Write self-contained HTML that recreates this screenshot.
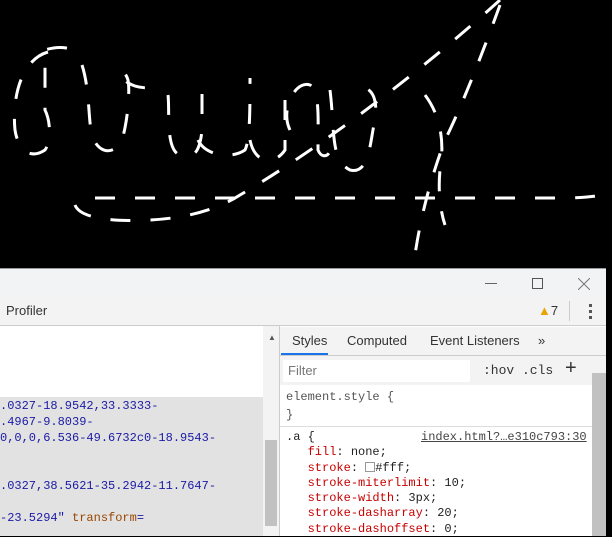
<!DOCTYPE html>
<html><head><style>
*{margin:0;padding:0;box-sizing:border-box}
body{width:612px;height:536px;background:#000;position:relative;overflow:hidden;font-family:"Liberation Sans",sans-serif}
.a{fill:none;stroke:#fff;stroke-width:3;stroke-dasharray:20;stroke-miterlimit:10}
.abs{position:absolute}
.mono{font-family:"Liberation Mono",monospace;font-size:12px;white-space:pre}
</style></head><body>
<svg class="abs" style="left:0;top:0" width="612" height="270">
<path class="a" d="M48,52 C20,60 12,100 15,130 C18,150 30,160 45,150 C52,140 50,120 45,110 L45,50 C60,45 75,48 80,55"/>
<path class="a" d="M82,65 C90,90 88,120 92,135 C98,155 115,155 122,140 C128,120 130,90 128,80 C125,70 118,68 120,75 C130,88 140,88 155,88"/>
<path class="a" d="M168,95 C170,110 165,150 180,155 C195,160 200,150 202,130 L202,80"/>
<path class="a" d="M198,140 C205,155 230,160 245,150 C250,140 250,110 250,78"/>
<path class="a" d="M250,140 C255,165 275,165 285,150 L285,80"/>
<path class="a" d="M290,130 C280,110 295,80 310,85 C320,90 318,120 318,150 C322,160 330,155 330,150"/>
<path class="a" d="M330,90 C335,130 330,160 350,170 C370,175 370,140 375,120 C378,100 372,90 365,88"/>
<path class="a" d="M75,205 C80,218 110,222 150,220 C190,218 220,208 240,195 C300,160 400,90 500,0"/>
<path class="a" d="M95,198 L560,198 C590,198 605,195 612,192"/>
<path class="a" d="M500,5 C480,60 460,110 445,140 C430,180 420,220 415,255"/>
<path class="a" d="M425,95 C440,115 445,140 440,170 C438,190 440,210 445,225"/>
</svg>
<div class="abs" style="left:0;top:268px;width:606px;height:268px;background:#fff;border-top:1px solid #999"></div>
<div class="abs" style="left:0;top:269px;width:606px;height:28px;background:#f1f3f4"></div>
<div class="abs" style="left:485px;top:283px;width:12px;height:1px;background:#666"></div>
<div class="abs" style="left:532px;top:278px;width:11px;height:11px;border:1px solid #555"></div>
<svg class="abs" style="left:578px;top:278px" width="12" height="12"><path d="M0,0 L12,12 M12,0 L0,12" stroke="#777" stroke-width="1"/></svg>
<div class="abs" style="left:0;top:297px;width:606px;height:29px;background:#f3f3f3;border-bottom:1px solid #ccc"></div>
<div class="abs" style="left:6px;top:303px;font-size:13px;color:#333">Profiler</div>
<div class="abs" style="left:538px;top:303px;font-size:13px;color:#333"><span style="color:#e8a400">▲</span>7</div>
<div class="abs" style="left:569px;top:301px;width:1px;height:20px;background:#ccc"></div>
<div class="abs" style="left:589px;top:304px;width:3px;height:3px;background:#555;box-shadow:0 6px #555,0 12px #555"></div>
<div class="abs" style="left:0;top:397px;width:263px;height:139px;background:#e2e2e2"></div>
<div class="abs mono" style="left:0;top:398px;color:#1a1aa6;line-height:16px">.0327-18.9542,33.3333-
.4967-9.8039-
0,0,0,6.536-49.6732c0-18.9543-


.0327,38.5621-35.2942-11.7647-

-23.5294" <span style="color:#994500">transform</span>=</div>
<div class="abs" style="left:263px;top:326px;width:16px;height:210px;background:#f3f3f3"></div>
<div class="abs" style="left:268px;top:333px;font-size:8px;color:#555">▲</div>
<div class="abs" style="left:265px;top:440px;width:12px;height:86px;background:#c1c1c1"></div>
<div class="abs" style="left:279px;top:326px;width:1px;height:210px;background:#ccc"></div>
<div class="abs" style="left:280px;top:327px;width:326px;height:29px;background:#f3f3f3;border-bottom:1px solid #ccc"></div>
<div class="abs" style="left:280px;top:333px;font-size:13px;color:#333;width:326px"><span style="position:absolute;left:12px">Styles</span><span style="position:absolute;left:67px">Computed</span><span style="position:absolute;left:150px">Event Listeners</span><span style="position:absolute;left:258px">»</span></div>
<div class="abs" style="left:281px;top:353px;width:47px;height:2px;background:#1a73e8"></div>
<div class="abs" style="left:280px;top:356px;width:326px;height:29px;background:#f3f3f3"></div>
<div class="abs" style="left:283px;top:360px;width:187px;height:22px;background:#fff"></div>
<div class="abs" style="left:288px;top:363px;font-size:13px;color:#777">Filter</div>
<div class="abs mono" style="left:483px;top:363px;color:#333;font-size:13px">:hov .cls</div>
<div class="abs" style="left:565px;top:357px;font-size:20px;color:#333">+</div>
<div class="abs" style="left:592px;top:373px;width:14px;height:163px;background:#c1c1c1"></div>
<div class="abs mono" style="left:286px;top:388px;color:#555;line-height:18px">element.style {
}</div>
<div class="abs" style="left:280px;top:426px;width:312px;height:1px;background:#ddd"></div>
<div class="abs mono" style="left:286px;top:430px;color:#222;line-height:15.3px">.a {
   <span style="color:#c80000">fill</span>: none;
   <span style="color:#c80000">stroke</span>: <span style="display:inline-block;width:10px;height:10px;border:1px solid #999;vertical-align:-1px"></span>#fff;
   <span style="color:#c80000">stroke-miterlimit</span>: 10;
   <span style="color:#c80000">stroke-width</span>: 3px;
   <span style="color:#c80000">stroke-dasharray</span>: 20;
   <span style="color:#c80000">stroke-dashoffset</span>: 0;</div>
<div class="abs mono" style="left:421px;top:430px;color:#444;text-decoration:underline">index.html?…e310c793:30</div>
</body></html>
